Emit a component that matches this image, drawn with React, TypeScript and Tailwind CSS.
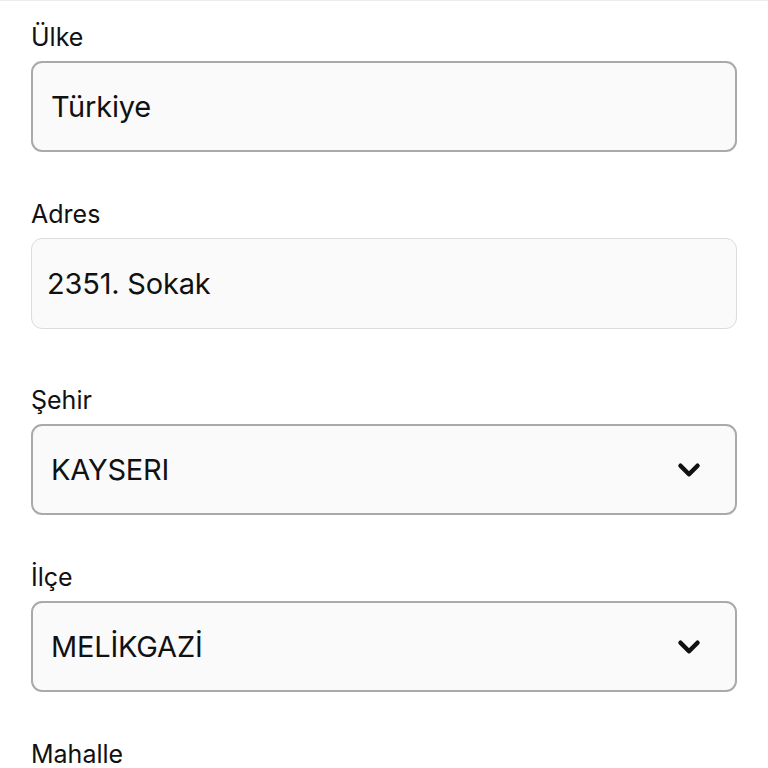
import { ChevronDown } from 'lucide-react';

interface FieldProps {
  label: string;
  value: string;
  select?: boolean;
  disabled?: boolean;
  className?: string;
}

const Field = ({ label, value, select, disabled, className }: FieldProps) => (
  <div className={className}>
    <label className="block text-[25px] leading-[30px] text-[#111]">{label}</label>
    <div
      className={
        'mt-[9px] flex h-[91px] items-center justify-between rounded-[11px] bg-[#fafafa] ' +
        (disabled
          ? 'border-[1.5px] border-[#dcdcdc] pl-[15px]'
          : 'border-2 border-[#aaaaaa] pl-[18px]')
      }
    >
      <span className="text-[29px] leading-none tracking-[-0.2px] text-[#111]">{value}</span>
      {select && (
        <ChevronDown className="mr-[29px] h-[34px] w-[34px] text-[#111]" strokeWidth={3.2} />
      )}
    </div>
  </div>
);

export default function App() {
  return (
    <div
      className="min-h-[768px] overflow-hidden border-t border-[#ececec] bg-white px-[31px] pt-[21px]"
      style={{ fontFamily: 'Inter, "Noto Sans", sans-serif' }}
    >
      <Field label="Ülke" value="Türkiye" />
      <Field className="mt-[47px]" label="Adres" value="2351. Sokak" disabled />
      <Field className="mt-[56px]" label="Şehir" value="KAYSERI" select />
      <Field className="mt-[47px]" label="İlçe" value="MELİKGAZİ" select />
      <div className="mt-[47px]">
        <label className="block text-[25px] leading-[30px] text-[#111]">Mahalle</label>
      </div>
    </div>
  );
}
